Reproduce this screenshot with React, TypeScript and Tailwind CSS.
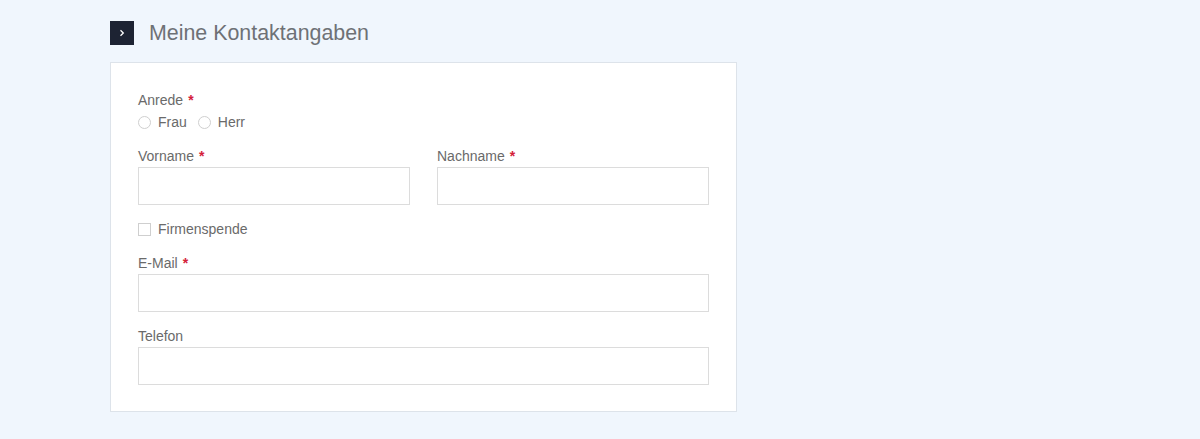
import React from 'react';

const Req = () => <span className="ml-[5px] font-bold text-[#d4203a]">*</span>;

const Field: React.FC<{ label: string; required?: boolean; className?: string }> = ({ label, required, className }) => (
  <div className={className}>
    <label className="block h-5 leading-5 text-[14px] text-[#6a6a6a]">
      {label}
      {required && <Req />}
    </label>
    <input className="mt-px block h-[38px] w-full border border-[#dcdcdc] bg-white px-3 text-[14px] outline-none" />
  </div>
);

export default function App() {
  return (
    <div
      className="min-h-[439px] w-full bg-[#f0f6fd] pl-[110px] pt-[21px]"
      style={{ fontFamily: '"Liberation Sans", Arial, sans-serif' }}
    >
      {/* HEADER */}
      <div className="flex h-6 items-center gap-[15px]">
        <div className="flex h-6 w-6 items-center justify-center bg-[#1d2333]">
          <svg width="8" height="8" viewBox="0 0 8 8" fill="none">
            <path d="M2.5 1.2 5.3 4 2.5 6.8" stroke="#fff" strokeWidth="1.3" />
          </svg>
        </div>
        <h2 className="text-[21.4px] leading-6 text-[#6e7176]">Meine Kontaktangaben</h2>
      </div>

      {/* CARD */}
      <div className="mt-[17px] w-[627px] border border-[#dde3ea] bg-white px-[27px] pb-[26px] pt-[27px]">
        {/* Anrede */}
        <div>
          <div className="h-5 leading-5 text-[14px] text-[#6a6a6a]">
            Anrede
            <Req />
          </div>
          <div className="mt-[2px] flex h-5 items-center text-[14px] text-[#6a6a6a]">
            <label className="flex items-center">
              <span className="h-[13px] w-[13px] rounded-full border border-[#cfcfcf] bg-white" />
              <span className="ml-[7px]">Frau</span>
            </label>
            <label className="ml-[11px] flex items-center">
              <span className="h-[13px] w-[13px] rounded-full border border-[#cfcfcf] bg-white" />
              <span className="ml-[7px]">Herr</span>
            </label>
          </div>
        </div>

        {/* Vorname / Nachname */}
        <div className="mt-[14px] grid grid-cols-2 gap-[27px]">
          <Field label="Vorname" required />
          <Field label="Nachname" required />
        </div>

        {/* Firmenspende */}
        <label className="mt-[14px] flex h-5 items-center text-[14px] text-[#6a6a6a]">
          <span className="h-[13px] w-[13px] border border-[#cfcfcf] bg-white" />
          <span className="ml-[7px]">Firmenspende</span>
        </label>

        <Field label="E-Mail" required className="mt-[14px]" />
        <Field label="Telefon" className="mt-[14px]" />
      </div>
    </div>
  );
}
